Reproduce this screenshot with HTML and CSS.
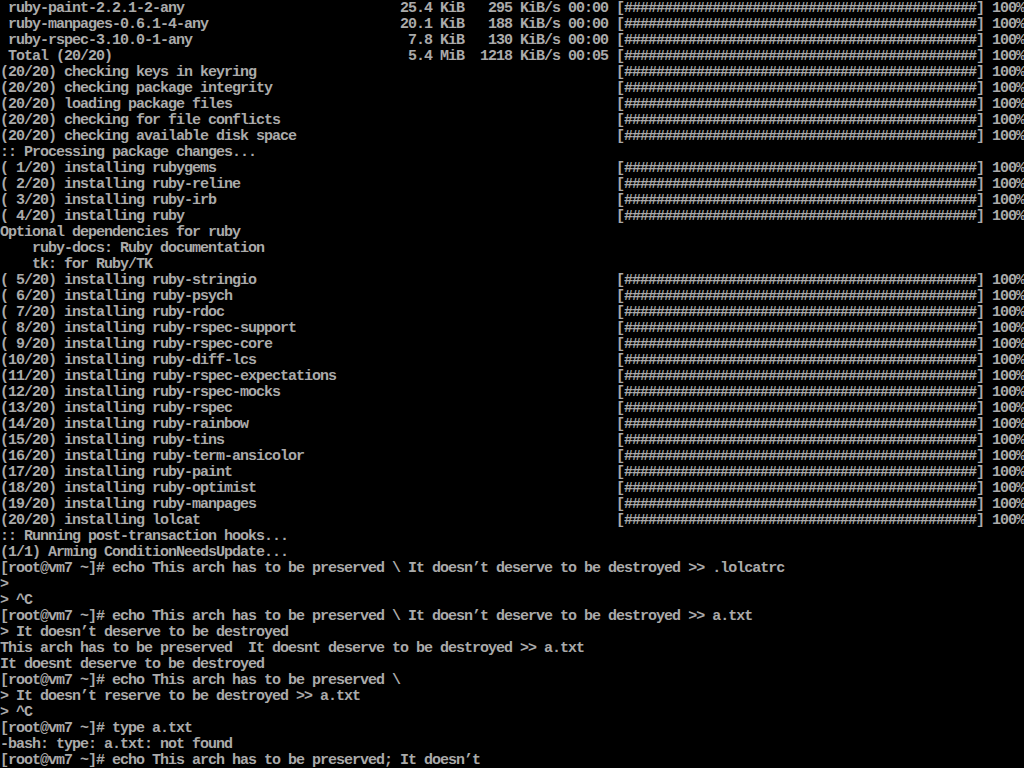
FILE: index.html
```html
<!DOCTYPE html>
<html lang="en">
<head>
<meta charset="utf-8">
<title>tty1</title>
<link rel="stylesheet" href="styles.css">
</head>
<body>
<main class="term">
<div class="row dl"><span> ruby-paint-2.2.1-2-any</span><span>25.4 KiB   295 KiB/s 00:00</span><span>[############################################] 100%</span></div>
<div class="row dl"><span> ruby-manpages-0.6.1-4-any</span><span>20.1 KiB   188 KiB/s 00:00</span><span>[############################################] 100%</span></div>
<div class="row dl"><span> ruby-rspec-3.10.0-1-any</span><span> 7.8 KiB   130 KiB/s 00:00</span><span>[############################################] 100%</span></div>
<div class="row dl"><span> Total (20/20)</span><span> 5.4 MiB  1218 KiB/s 00:05</span><span>[############################################] 100%</span></div>
<div class="row"><span>(20/20) checking keys in keyring</span><span>[############################################] 100%</span></div>
<div class="row"><span>(20/20) checking package integrity</span><span>[############################################] 100%</span></div>
<div class="row"><span>(20/20) loading package files</span><span>[############################################] 100%</span></div>
<div class="row"><span>(20/20) checking for file conflicts</span><span>[############################################] 100%</span></div>
<div class="row"><span>(20/20) checking available disk space</span><span>[############################################] 100%</span></div>
<div class="line">:: Processing package changes...</div>
<div class="row"><span>( 1/20) installing rubygems</span><span>[############################################] 100%</span></div>
<div class="row"><span>( 2/20) installing ruby-reline</span><span>[############################################] 100%</span></div>
<div class="row"><span>( 3/20) installing ruby-irb</span><span>[############################################] 100%</span></div>
<div class="row"><span>( 4/20) installing ruby</span><span>[############################################] 100%</span></div>
<div class="line">Optional dependencies for ruby</div>
<div class="line">    ruby-docs: Ruby documentation</div>
<div class="line">    tk: for Ruby/TK</div>
<div class="row"><span>( 5/20) installing ruby-stringio</span><span>[############################################] 100%</span></div>
<div class="row"><span>( 6/20) installing ruby-psych</span><span>[############################################] 100%</span></div>
<div class="row"><span>( 7/20) installing ruby-rdoc</span><span>[############################################] 100%</span></div>
<div class="row"><span>( 8/20) installing ruby-rspec-support</span><span>[############################################] 100%</span></div>
<div class="row"><span>( 9/20) installing ruby-rspec-core</span><span>[############################################] 100%</span></div>
<div class="row"><span>(10/20) installing ruby-diff-lcs</span><span>[############################################] 100%</span></div>
<div class="row"><span>(11/20) installing ruby-rspec-expectations</span><span>[############################################] 100%</span></div>
<div class="row"><span>(12/20) installing ruby-rspec-mocks</span><span>[############################################] 100%</span></div>
<div class="row"><span>(13/20) installing ruby-rspec</span><span>[############################################] 100%</span></div>
<div class="row"><span>(14/20) installing ruby-rainbow</span><span>[############################################] 100%</span></div>
<div class="row"><span>(15/20) installing ruby-tins</span><span>[############################################] 100%</span></div>
<div class="row"><span>(16/20) installing ruby-term-ansicolor</span><span>[############################################] 100%</span></div>
<div class="row"><span>(17/20) installing ruby-paint</span><span>[############################################] 100%</span></div>
<div class="row"><span>(18/20) installing ruby-optimist</span><span>[############################################] 100%</span></div>
<div class="row"><span>(19/20) installing ruby-manpages</span><span>[############################################] 100%</span></div>
<div class="row"><span>(20/20) installing lolcat</span><span>[############################################] 100%</span></div>
<div class="line">:: Running post-transaction hooks...</div>
<div class="line">(1/1) Arming ConditionNeedsUpdate...</div>
<div class="line">[root@vm7 ~]# echo This arch has to be preserved \ It doesn’t deserve to be destroyed &gt;&gt; .lolcatrc</div>
<div class="line">&gt;</div>
<div class="line">&gt; ^C</div>
<div class="line">[root@vm7 ~]# echo This arch has to be preserved \ It doesn’t deserve to be destroyed &gt;&gt; a.txt</div>
<div class="line">&gt; It doesn’t deserve to be destroyed</div>
<div class="line">This arch has to be preserved  It doesnt deserve to be destroyed &gt;&gt; a.txt</div>
<div class="line">It doesnt deserve to be destroyed</div>
<div class="line">[root@vm7 ~]# echo This arch has to be preserved \</div>
<div class="line">&gt; It doesn’t reserve to be destroyed &gt;&gt; a.txt</div>
<div class="line">&gt; ^C</div>
<div class="line">[root@vm7 ~]# type a.txt</div>
<div class="line">-bash: type: a.txt: not found</div>
<div class="line">[root@vm7 ~]# echo This arch has to be preserved; It doesn’t</div>
</main>
</body>
</html>
```
FILE: styles.css
```css
html, body {
  margin: 0;
  padding: 0;
  background: #000000;
  width: 1024px;
  height: 768px;
  overflow: hidden;
}

.term {
  display: flex;
  flex-direction: column;
  box-sizing: border-box;
  width: 1024px;
  height: 768px;
  padding-top: 1px;
  overflow: hidden;
  color: #aaaaaa;
  font-family: "Liberation Mono", "DejaVu Sans Mono", monospace;
  font-size: 15px;
  letter-spacing: -1px;
  line-height: 16px;
  font-weight: bold;
}

.line,
.row span {
  white-space: pre;
  overflow: hidden;
  height: 16px;
  flex: none;
}

.row {
  display: grid;
  grid-template-columns: 616px 408px;
  height: 16px;
  flex: none;
}

.row.dl {
  grid-template-columns: 400px 216px 408px;
}
```
